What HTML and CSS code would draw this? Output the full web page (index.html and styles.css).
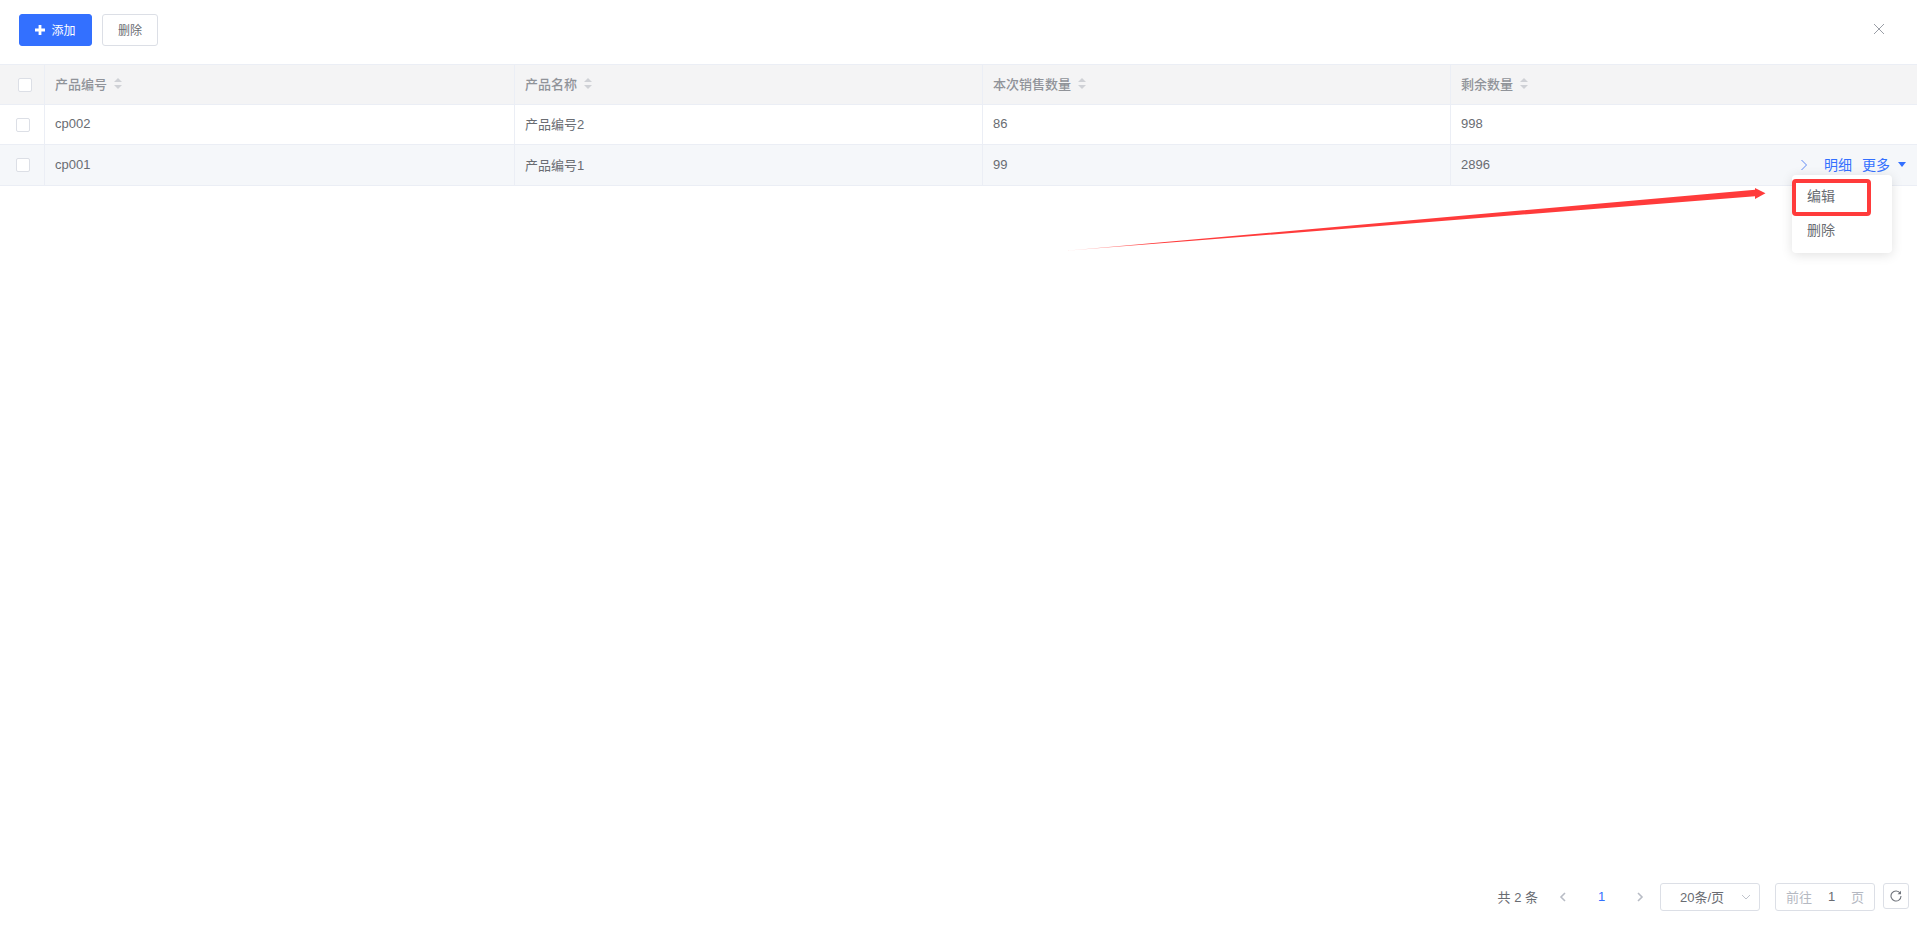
FILE: index.html
```html
<!DOCTYPE html>
<html lang="zh">
<head>
<meta charset="utf-8">
<title>产品</title>
<link rel="stylesheet" href="styles.css">
</head>
<body>
<div class="app">
  <div class="toolbar">
    <button class="btn btn-primary"><svg class="plus" viewBox="0 0 10 10" width="10" height="10"><path d="M3.6 0h2.8v3.600H10v2.800H6.400V10H3.600V6.400H0V3.600h3.600z"/></svg>添加</button>
    <button class="btn">删除</button>
    <svg class="close" viewBox="0 0 12 12" width="12" height="12"><path d="M1 1l10 10M11 1L1 11"/></svg>
  </div>
  <div class="table">
    <div class="row head">
      <div class="cell c0"><span class="check"></span></div>
      <div class="cell c1">产品编号<svg class="sort" viewBox="0 0 8 11" width="8" height="11"><path d="M4 0l4 4H0zM4 11L0 7h8z"/></svg></div>
      <div class="cell c2">产品名称<svg class="sort" viewBox="0 0 8 11" width="8" height="11"><path d="M4 0l4 4H0zM4 11L0 7h8z"/></svg></div>
      <div class="cell c3">本次销售数量<svg class="sort" viewBox="0 0 8 11" width="8" height="11"><path d="M4 0l4 4H0zM4 11L0 7h8z"/></svg></div>
      <div class="cell c4">剩余数量<svg class="sort" viewBox="0 0 8 11" width="8" height="11"><path d="M4 0l4 4H0zM4 11L0 7h8z"/></svg></div>
    </div>
    <div class="row">
      <div class="cell c0 body0"><span class="check"></span></div>
      <div class="cell c1">cp002</div>
      <div class="cell c2">产品编号2</div>
      <div class="cell c3">86</div>
      <div class="cell c4">998</div>
    </div>
    <div class="row hover">
      <div class="cell c0 body0"><span class="check"></span></div>
      <div class="cell c1">cp001</div>
      <div class="cell c2">产品编号1</div>
      <div class="cell c3">99</div>
      <div class="cell c4">2896
        <div class="actions">
          <svg class="chev" viewBox="0 0 8 12" width="8" height="12"><path d="M1.500 1l5 5-5 5"/></svg>
          <span class="link">明细</span>
          <span class="link">更多</span>
          <svg class="caret" viewBox="0 0 8 5" width="8" height="5"><path d="M0 0h8L4 5z"/></svg>
        </div>
      </div>
    </div>
  </div>
  <div class="spacer"></div>
  <div class="pager">
    <span class="total">共 2 条</span>
    <svg class="pg-arrow" viewBox="0 0 8 10" width="8" height="10"><path d="M6 1L2 5l4 4"/></svg>
    <span class="pg-num">1</span>
    <svg class="pg-arrow" viewBox="0 0 8 10" width="8" height="10"><path d="M2 1l4 4-4 4"/></svg>
    <div class="size">20条/页<svg class="size-caret" viewBox="0 0 10 6" width="10" height="6"><path d="M1 1l4 4 4-4"/></svg></div>
    <div class="jump"><span class="muted">前往</span><span class="jump-num">1</span><span class="muted">页</span></div>
    <div class="refresh"><svg viewBox="0 0 12 12" width="12" height="12"><path d="M10.200 3.300A5 5 0 1 0 11 6"/><path class="fill" d="M11 .8v3.400H7.600z"/></svg></div>
  </div>
</div>
<div class="menu">
  <div class="menu-item">编辑</div>
  <div class="menu-item">删除</div>
</div>
<div class="mark"></div>
<svg class="arrow" width="1917" height="927" viewBox="0 0 1917 927">
  <defs><linearGradient id="fade" gradientUnits="userSpaceOnUse" x1="1066" y1="250" x2="1150" y2="243"><stop offset="0" stop-color="#ff3b3b" stop-opacity="0.35"/><stop offset="1" stop-color="#ff3b3b"/></linearGradient></defs>
  <path fill="url(#fade)" d="M1066 250.800L1755 189.800L1755 188L1765.500 193.200L1755 199L1755 196.200Z"/>
</svg>
</body>
</html>
```
FILE: styles.css
```css
* { box-sizing: border-box; }
html, body { margin: 0; padding: 0; height: 100%; overflow: hidden; background: #fff; }
body { font: 13px "Liberation Sans", "Noto Sans CJK SC", sans-serif; color: #696c72; }
.app { display: flex; flex-direction: column; height: 927px; }
.toolbar { height: 64px; flex: none; display: flex; align-items: center; gap: 10px; padding: 0 19px; }
.btn { height: 32px; width: 56px; padding: 0 0 2px; margin-top: -4px; border: 1px solid #dcdfe6; border-radius: 3px; background: #fff; color: #696c72; font: inherit; font-size: 12px; display: flex; align-items: center; justify-content: center; }
.btn-primary { width: 73px; background: #3370ff; border-color: #3370ff; color: #fff; gap: 6px; }
.plus { fill: #fff; margin-top: 2px; }
.close { margin-left: auto; margin-right: 13px; margin-top: -6px; fill: none; stroke: #9a9ea6; stroke-width: 1; }
.table { flex: none; border-top: 1px solid #ebeef5; }
.row { display: flex; height: 40px; border-bottom: 1px solid #ebeef5; }
.row.hover { height: 41px; background: #f5f7fa; }
.head { background: #f4f4f5; color: #909399; font-weight: 500; }
.cell { position: relative; display: flex; align-items: center; padding: 0 0 2px 10px; border-right: 1px solid #ebeef5; }
.c0 { width: 45px; padding: 0 0 0 18px; }
.c0.body0 { padding-left: 16px; }
.c1 { width: 470px; }
.c2 { width: 468px; }
.c3 { width: 468px; }
.c4 { flex: 1; border-right: 0; }
.check { width: 14px; height: 14px; background: #fff; border: 1px solid #dcdfe6; border-radius: 2px; }
.sort { margin-left: 7px; fill: #cfd1d6; }
.actions { position: absolute; right: 11px; top: 0; bottom: 1px; display: flex; align-items: center; color: #3370ff; font-size: 14px; }
.chev { fill: none; stroke: #5f8af5; stroke-width: 1; margin-right: 16px; }
.link { margin-right: 10px; padding-bottom: 2px; }
.link + .link { margin-right: 8px; }
.caret { fill: #3370ff; }
.spacer { flex: 1; }
.pager { flex: none; height: 59px; padding: 0 8px 1px 0; display: flex; align-items: center; justify-content: flex-end; }
.total { margin-right: 21px; padding-bottom: 2px; }
.pg-arrow { flex: none; fill: none; stroke: #b8bcc5; stroke-width: 1.6; }
.pg-num { color: #3370ff; width: 69px; text-align: center; padding-bottom: 2px; }
.size { width: 100px; height: 28px; margin-left: 16px; padding: 0 8px 2px 19px; border: 1px solid #dcdfe6; border-radius: 3px; display: flex; align-items: center; justify-content: space-between; }
.size-caret { fill: none; stroke: #c0c4cc; stroke-width: 1; margin-top: 2px; }
.jump { width: 100px; height: 28px; margin-left: 15px; padding: 0 10px 2px; border: 1px solid #dcdfe6; border-radius: 3px; display: flex; align-items: center; justify-content: space-between; }
.muted { color: #b5b9c2; }
.refresh { width: 26px; height: 26px; margin-left: 8px; margin-top: -2px; border: 1px solid #dcdfe6; border-radius: 3px; display: flex; align-items: center; justify-content: center; }
.refresh svg { fill: none; stroke: #70747c; stroke-width: 1.1; }
.refresh .fill { fill: #70747c; stroke: none; }
.menu { position: absolute; left: 1792px; top: 175px; width: 100px; height: 78px; padding: 5px 0; background: #fff; border-radius: 4px; box-shadow: 0 2px 12px rgba(0,0,0,.12); font-size: 14px; }
.menu-item { height: 34px; line-height: 32px; padding-left: 15px; }
.mark { position: absolute; left: 1792px; top: 179px; width: 79px; height: 37px; border: 4px solid #ff3b3b; border-radius: 4px; }
.arrow { position: absolute; left: 0; top: 0; pointer-events: none; }
```
